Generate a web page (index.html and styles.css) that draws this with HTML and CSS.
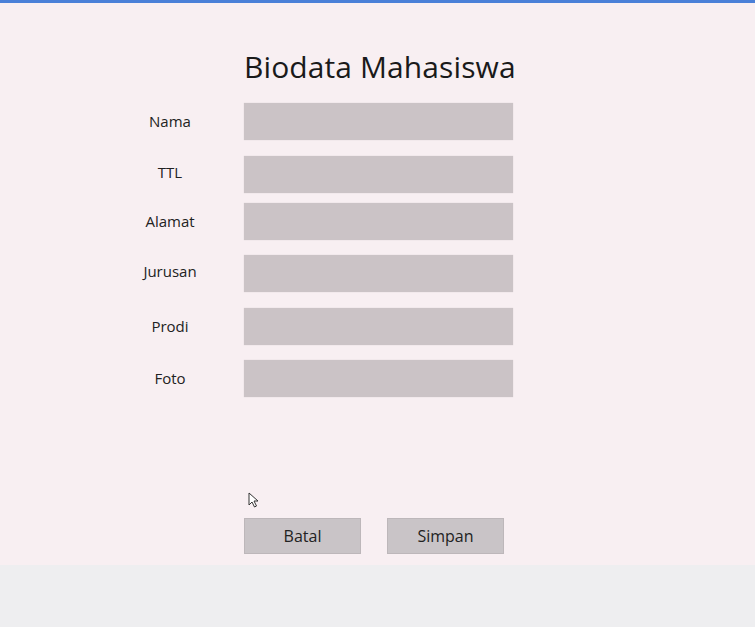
FILE: index.html
```html
<!DOCTYPE html>
<html>
<head>
<meta charset="utf-8">
<link rel="stylesheet" href="styles.css">
</head>
<body>
<div class="topline"></div>
<main class="page">
  <h1 class="title">Biodata Mahasiswa</h1>
  <form class="form">
    <label class="lbl">Nama</label><div class="field"></div>
    <label class="lbl lbl-up">TTL</label><div class="field"></div>
    <label class="lbl">Alamat</label><div class="field"></div>
    <label class="lbl lbl-up">Jurusan</label><div class="field"></div>
    <label class="lbl">Prodi</label><div class="field"></div>
    <label class="lbl">Foto</label><div class="field"></div>
  </form>
  <div class="cursor-row">
    <svg class="cursor" width="12" height="16" viewBox="0 0 12 16"><path d="M1 1 L1 13 L4 10 L6.5 15 L8.5 14 L6 9 L10 9 Z" fill="#fff" stroke="#333" stroke-width="1"/></svg>
  </div>
  <div class="actions">
    <button type="button" class="btn">Batal</button>
    <button type="button" class="btn">Simpan</button>
  </div>
</main>
<div class="bottom"></div>
</body>
</html>
```
FILE: styles.css
```css
html, body {
  margin: 0;
  padding: 0;
}
body {
  width: 755px;
  height: 627px;
  overflow: hidden;
  background: #f8eff2;
  font-family: "Open Sans", "Noto Sans", sans-serif;
  color: #1e1e1e;
  display: flex;
  flex-direction: column;
}
.topline {
  height: 3px;
  background: #4a80d8;
  flex: none;
}
.page {
  padding-left: 96px;
  flex: none;
  height: 562px;
}
.title {
  margin: 44px 0 0 148px;
  font-weight: 400;
  font-size: 30px;
  line-height: 40px;
  letter-spacing: 0.1px;
  color: #1a1a1a;
}
.form {
  margin-top: 16px;
  display: grid;
  grid-template-columns: 148px 269px;
  grid-template-rows: 53px 47px 52px 53px 52px 37px;
  align-items: start;
}
.lbl {
  text-align: center;
  font-size: 15px;
  line-height: 37px;
  height: 37px;
  color: #222;
}
.lbl-up {
  line-height: 33px;
}
.field {
  height: 37px;
  background: #cbc3c6;
  box-shadow: 0 0 1px rgba(0,0,0,0.15);
}
.cursor-row {
  margin: 95px 0 0 152px;
  height: 20px;
}
.cursor {
  display: block;
}
.actions {
  margin: 6px 0 0 148px;
  display: flex;
  gap: 26px;
}
.btn {
  width: 117px;
  height: 36px;
  border: 1px solid #bdb7ba;
  background: #c9c4c7;
  font-family: "Open Sans", "Noto Sans", sans-serif;
  font-size: 16px;
  color: #222;
  padding: 0;
}
.bottom {
  flex: 1;
  background: #eeeef0;
}
```
